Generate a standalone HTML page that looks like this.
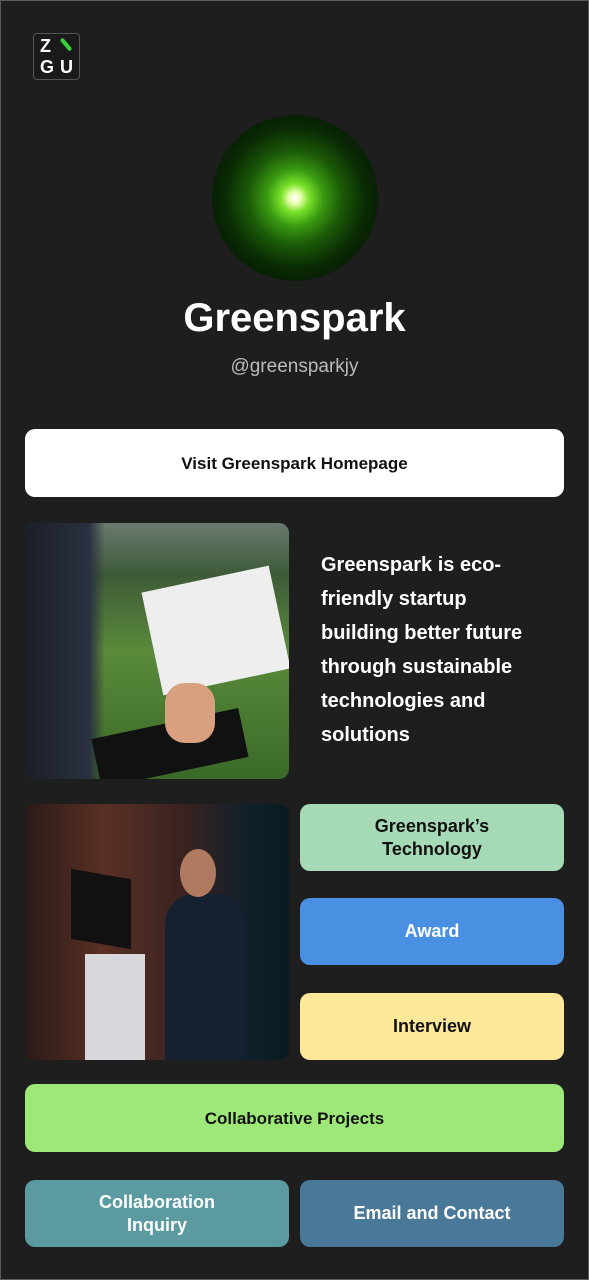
<!DOCTYPE html>
<html><head><style>
*{margin:0;padding:0;box-sizing:border-box}
body{width:589px;height:1280px;background:#1e1e1e;font-family:"Liberation Sans",sans-serif;position:relative;overflow:hidden}
.a{position:absolute}
.btn{position:absolute;border-radius:10px;display:flex;align-items:center;justify-content:center;text-align:center;font-weight:600;font-size:18px;line-height:23px}
</style></head><body>
<div class="a" style="left:0;top:0;width:589px;height:1280px;border:1px solid #5a5a5a"></div>
<div class="a" style="left:33px;top:33px;width:47px;height:47px;border:1px solid #555;border-radius:4px;background:#1a1a1a"></div>
<div class="a" style="left:40px;top:36px;color:#fff;font:bold 18px 'Liberation Sans',sans-serif;line-height:21px;letter-spacing:6px">Z<br>GU</div>
<div class="a" style="left:64px;top:37px;width:4px;height:15px;background:#3ad23a;transform:rotate(-40deg);border-radius:2px"></div>
<div class="a" style="left:212px;top:115px;width:166px;height:166px;border-radius:50%;background:radial-gradient(circle at 50% 50%,#fff 0,#eaffb0 5%,#7be22a 12%,#3a9a12 24%,#1b5a08 40%,#0a2a04 60%,#020602 100%)"></div>
<div class="a" style="left:0;width:589px;top:296px;text-align:center;color:#fff;font-weight:bold;font-size:40px">Greenspark</div>
<div class="a" style="left:0;width:589px;top:356px;text-align:center;color:#bbb;font-size:19px">@greensparkjy</div>
<div class="btn" style="left:25px;top:429px;width:539px;height:68px;background:#fff;color:#111;font-size:17px">Visit Greenspark Homepage</div>
<div class="a" style="left:25px;top:523px;width:264px;height:256px;border-radius:10px;overflow:hidden;background:linear-gradient(180deg,#6a7a70 0,#3e5a38 20%,#5a8a3a 50%,#3a6a28 100%)">
<div class="a" style="left:0;top:0;width:80px;height:256px;background:linear-gradient(90deg,#1a1e28,#2a3040 80%,transparent)"></div>
<div class="a" style="left:126px;top:55px;width:130px;height:105px;background:#eee;transform:rotate(-12deg)"></div>
<div class="a" style="left:70px;top:200px;width:150px;height:50px;background:#111;transform:rotate(-12deg)"></div>
<div class="a" style="left:140px;top:160px;width:50px;height:60px;background:#d9a080;border-radius:20px"></div>
</div>
<div class="a" style="left:321px;top:548px;white-space:nowrap;color:#fff;font-size:20px;font-weight:bold;line-height:34px">Greenspark is eco-<br>friendly startup<br>building better future<br>through sustainable<br>technologies and<br>solutions</div>
<div class="a" style="left:25px;top:804px;width:264px;height:256px;border-radius:10px;overflow:hidden;background:linear-gradient(90deg,#2a1a18 0,#5a3024 30%,#3a2220 60%,#10202a 85%,#0a1a22 100%)">
<div class="a" style="left:60px;top:150px;width:60px;height:106px;background:#d8d8dc"></div>
<div class="a" style="left:46px;top:70px;width:60px;height:70px;background:#111;transform:skewY(10deg)"></div>
<div class="a" style="left:140px;top:90px;width:80px;height:166px;background:#152030;border-radius:30px 30px 0 0"></div>
<div class="a" style="left:155px;top:45px;width:36px;height:48px;background:#b07a60;border-radius:50%"></div>
</div>
<div class="btn" style="left:300px;top:804px;width:264px;height:67px;background:#a6d9b6;color:#111">Greenspark’s<br>Technology</div>
<div class="btn" style="left:300px;top:898px;width:264px;height:67px;background:#4a90e2;color:#fff">Award</div>
<div class="btn" style="left:300px;top:993px;width:264px;height:67px;background:#fde89a;color:#111">Interview</div>
<div class="btn" style="left:25px;top:1084px;width:539px;height:68px;background:#9ee87a;color:#111;font-size:17px">Collaborative Projects</div>
<div class="btn" style="left:25px;top:1180px;width:264px;height:67px;background:#5a9aa0;color:#fff">Collaboration<br>Inquiry</div>
<div class="btn" style="left:300px;top:1180px;width:264px;height:67px;background:#4a7898;color:#fff">Email and Contact</div>
</body></html>
